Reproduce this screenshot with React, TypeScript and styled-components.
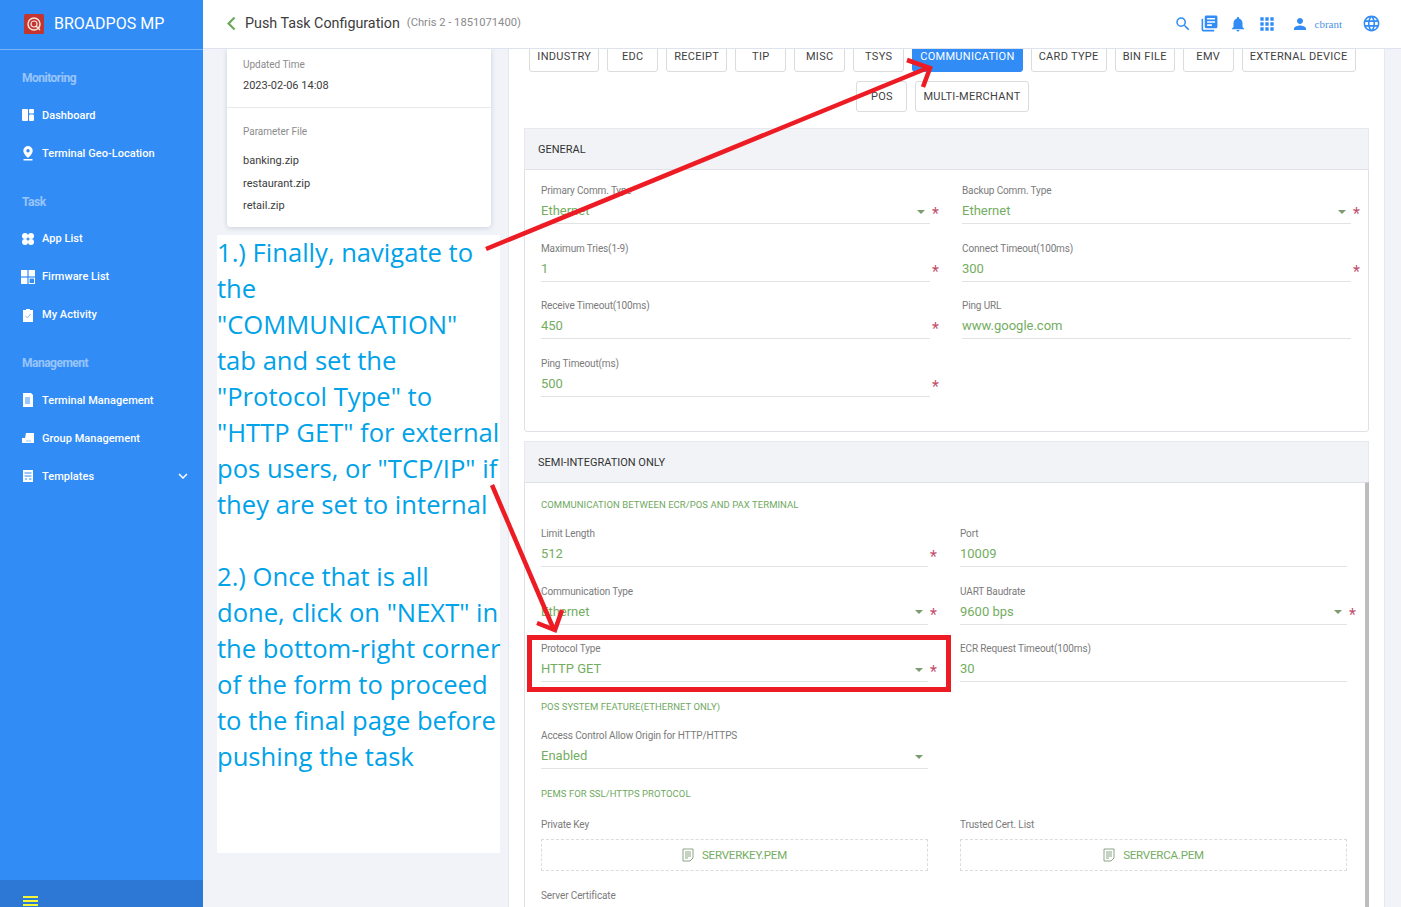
import React from "react";
import styled, { createGlobalStyle } from "styled-components";
import {
  MdApps,
  MdChevronLeft,
  MdExpandMore,
  MdLanguage,
  MdLibraryBooks,
  MdNotifications,
  MdPerson,
  MdSearch,
} from "react-icons/md";

const GlobalStyle = createGlobalStyle`
  html, body {
    margin: 0;
    padding: 0;
    background: #f1f3f8;
    font-family: Roboto, "Liberation Sans", sans-serif;
  }
  * {
    box-sizing: border-box;
  }
`;

const Page = styled.div`
  position: relative;
  display: flex;
  width: 1401px;
  height: 907px;
  overflow: hidden;
`;

/* ---------- sidebar ---------- */

const Sidebar = styled.aside`
  display: flex;
  flex-direction: column;
  width: 203px;
  height: 907px;
  background: #318cf6;
  color: #fff;
`;

const Brand = styled.div`
  display: flex;
  align-items: center;
  gap: 10px;
  height: 50px;
  padding: 0 0 2px 24px;
  border-bottom: 1px solid rgba(255, 255, 255, 0.35);
  font-size: 16px;
`;

const Nav = styled.nav`
  flex: 1;
  display: flex;
  flex-direction: column;
  gap: 11.5px;
  padding-top: 10px;
`;

const NavGroup = styled.div`
  display: flex;
  flex-direction: column;
`;

const NavTitle = styled.div`
  display: flex;
  align-items: center;
  height: 36px;
  padding-left: 22px;
  font-size: 12px;
  font-weight: 700;
  letter-spacing: -0.5px;
  color: rgba(255, 255, 255, 0.5);
`;

const NavItem = styled.div`
  display: flex;
  align-items: center;
  gap: 7px;
  height: 38px;
  padding: 0 11px 0 21px;
  font-size: 11px;
  letter-spacing: 0.03px;
  font-weight: 500;
  svg {
    flex: none;
  }
  span {
    flex: 1;
  }
`;

const CollapseBar = styled.div`
  height: 27px;
  padding: 16px 0 0 23px;
  background: #2c78d4;
`;

const CollapseLine = styled.div`
  width: 15px;
  height: 2px;
  margin-bottom: 2px;
  background: #f4f536;
`;

/* ---------- header ---------- */

const Main = styled.div`
  flex: 1;
  display: flex;
  flex-direction: column;
  min-width: 0;
`;

const Header = styled.header`
  position: relative;
  z-index: 2;
  display: flex;
  align-items: center;
  flex: none;
  height: 49px;
  padding: 0 20px 1px 15px;
  background: #fff;
  border-bottom: 1px solid #dfe3ee;
`;

const PageTitle = styled.h1`
  margin: 0 0 2px;
  font-size: 14.3px;
  font-weight: 400;
  color: #3c3c3c;
`;

const PageSub = styled.span`
  margin: 0 0 2px 7px;
  font-size: 11.2px;
  color: #8a8a8a;
`;

const HeaderIcons = styled.div`
  display: flex;
  align-items: center;
  margin-left: auto;
  color: #318cf6;
`;

const HeaderIcon = styled.span<{ $gap: number }>`
  display: flex;
  margin-right: ${(p) => p.$gap}px;
`;

const UserName = styled.span`
  margin: 0 20px 0 6px;
  font-family: "Liberation Serif", serif;
  font-size: 11px;
  color: #4c93e6;
`;

/* ---------- content ---------- */

const Content = styled.div`
  flex: 1;
  display: flex;
  min-height: 0;
  overflow: hidden;
`;

const LeftColumn = styled.div`
  flex: none;
  width: 305px;
  padding-left: 24px;
`;

const InfoCard = styled.div`
  width: 264px;
  background: #fff;
  border-radius: 0 0 4px 4px;
  box-shadow: 0 1px 5px rgba(60, 70, 100, 0.2);
`;

const InfoBlock = styled.div<{ $divided?: boolean }>`
  padding: ${(p) => (p.$divided ? "17px 16px 14px" : "9px 16px 14px")};
  border-top: ${(p) => (p.$divided ? "1px solid #e8e8e8" : "none")};
`;

const InfoLabel = styled.div<{ $gap: number }>`
  margin-bottom: ${(p) => p.$gap}px;
  font-size: 10px;
  line-height: 13px;
  letter-spacing: -0.03px;
  color: #8c8c8c;
`;

const InfoValue = styled.div<{ $height: number }>`
  height: ${(p) => p.$height}px;
  font-size: 11px;
  line-height: 14px;
  color: #3c3c3c;
`;

const Panel = styled.main`
  flex: none;
  width: 877px;
  padding: 0 15px;
  background: #fff;
  border-left: 1px solid #e6e8ef;
  border-right: 1px solid #e6e8ef;
`;

const Tabs = styled.div`
  display: flex;
  flex-wrap: wrap;
  justify-content: center;
  gap: 9px 8px;
  margin: -8px 8px 16px 0;
`;

const Tab = styled.div<{ $active?: boolean }>`
  display: flex;
  align-items: center;
  justify-content: center;
  min-width: 51px;
  height: 31px;
  padding: 0 7px;
  border: 1px solid ${(p) => (p.$active ? "#318cf6" : "#dcdcdc")};
  border-radius: 3px;
  background: ${(p) => (p.$active ? "#318cf6" : "#fff")};
  color: ${(p) => (p.$active ? "#fff" : "#3f3f3f")};
  font-size: 11px;
  letter-spacing: 0.3px;
`;

const SectionHead = styled.div`
  display: flex;
  align-items: center;
  height: 41px;
  padding-left: 13px;
  background: #f2f3f7;
  border: 1px solid #e8e9ee;
  border-bottom: none;
  font-size: 11px;
  color: #333;
`;

const SectionBody = styled.div<{ $scroll?: boolean }>`
  height: ${(p) => (p.$scroll ? "430px" : "263px")};
  margin-bottom: 9px;
  padding: ${(p) => (p.$scroll ? "15px 0 0 16px" : "14px 0 0 16px")};
  border: 1px solid #dfe1e6;
  border-right: ${(p) => (p.$scroll ? "4px solid #bdbdbd" : "1px solid #dfe1e6")};
  border-radius: 0 0 3px 3px;
  overflow: hidden;
`;

const FieldGrid = styled.div<{ $col: number }>`
  display: grid;
  grid-template-columns: ${(p) => p.$col}px ${(p) => p.$col}px;
  column-gap: 32px;
  row-gap: 17.5px;
`;

const Field = styled.div`
  position: relative;
`;

const FieldLabel = styled.div`
  height: 14px;
  font-size: 10px;
  line-height: 14px;
  letter-spacing: -0.13px;
  color: #7b7b7b;
`;

const FieldValue = styled.div`
  display: flex;
  align-items: center;
  justify-content: space-between;
  height: 26px;
  padding: 1px 5px 1px 0;
  border-bottom: 1px solid #e3e3e3;
  font-size: 13px;
  color: #74ad62;
`;

const Caret = styled.i`
  width: 0;
  height: 0;
  margin-top: 2px;
  border-left: 4px solid transparent;
  border-right: 4px solid transparent;
  border-top: 4px solid #7c9c70;
`;

const Star = styled.span`
  position: absolute;
  right: -9px;
  top: 21px;
  font-size: 16px;
  line-height: 18px;
  color: #c2506b;
`;

const SubHeading = styled.div<{ $top: number; $bottom: number }>`
  margin: ${(p) => p.$top}px 0 ${(p) => p.$bottom}px;
  font-size: 9.5px;
  line-height: 14px;
  letter-spacing: 0.05px;
  color: #6fa961;
`;

const UploadBox = styled.div`
  display: flex;
  align-items: center;
  justify-content: center;
  gap: 8px;
  height: 32px;
  margin-top: 7px;
  border: 1px dashed #dcdcdc;
  font-size: 11.5px;
  letter-spacing: -0.2px;
  color: #74ad62;
`;

/* ---------- things drawn over the page ---------- */

const Note = styled.div`
  position: absolute;
  left: 217px;
  top: 235px;
  z-index: 3;
  width: 283px;
  height: 618px;
  background: #fff;
  color: #00a2e8;
  font-family: "Open Sans", sans-serif;
  font-size: 25.6px;
  line-height: 36px;
  white-space: pre;
`;

const RedBox = styled.div`
  position: absolute;
  left: 527px;
  top: 635px;
  z-index: 3;
  width: 424px;
  height: 57px;
  border: 5px solid #ed1c24;
`;

const Arrows = styled.svg`
  position: absolute;
  left: 0;
  top: 0;
  z-index: 4;
  pointer-events: none;
`;

/* ---------- drawn icons ---------- */

const LogoIcon = () => (
  <svg width="20" height="20" viewBox="0 0 20 20">
    <rect width="20" height="20" rx="1.5" fill="#c4352f" />
    <circle cx="10" cy="10" r="6" fill="none" stroke="#f8e6e0" strokeWidth="1.5" />
    <circle cx="10" cy="10" r="3" fill="none" stroke="#f8e6e0" strokeWidth="1.2" />
    <path d="M12 12l4 4" stroke="#f8e6e0" strokeWidth="1.5" />
  </svg>
);

const DashboardIcon = () => (
  <svg width="14" height="14" viewBox="0 0 14 14" fill="#fff">
    <rect x="1" y="1" width="6" height="12" rx="1" />
    <rect x="8" y="1" width="5" height="4.5" rx="1" />
    <rect x="8" y="6.5" width="5" height="6.5" rx="1" />
  </svg>
);

const PinIcon = () => (
  <svg width="14" height="15" viewBox="0 0 14 15" fill="#fff">
    <path
      fillRule="evenodd"
      d="M7 0a4.7 4.7 0 0 1 4.7 4.7C11.700 8 7 12 7 12S2.300 8 2.300 4.700A4.700 4.700 0 0 1 7 0zm0 3a1.700 1.700 0 1 0 0 3.400A1.700 1.700 0 0 0 7 3z"
    />
    <rect x="2.500" y="13" width="9" height="1.500" />
  </svg>
);

const AppsIcon = () => (
  <svg width="14" height="14" viewBox="0 0 14 14" fill="#fff">
    <circle cx="4" cy="4" r="3" />
    <circle cx="10" cy="4" r="3" />
    <circle cx="4" cy="10" r="3" />
    <circle cx="10" cy="10" r="3" />
  </svg>
);

const FirmwareIcon = () => (
  <svg width="14" height="14" viewBox="0 0 14 14" fill="#fff">
    <rect width="6.4" height="6.4" />
    <rect x="7.6" width="6.4" height="6.4" />
    <rect y="7.6" width="6.4" height="6.4" />
    <rect x="8.1" y="8.1" width="5.4" height="5.4" fill="none" stroke="#fff" />
  </svg>
);

const ActivityIcon = () => (
  <svg width="14" height="14" viewBox="0 0 14 14" fill="#fff">
    <path d="M2 2h3V1h4v1h3v12H2z" />
    <path d="M4.5 8l2 2 3-4" fill="none" stroke="#8db9f0" />
  </svg>
);

const TerminalIcon = () => (
  <svg width="14" height="14" viewBox="0 0 14 14" fill="#fff">
    <path d="M2 0h8l2 2v12H2z" />
    <rect x="4" y="4" width="5" height="7" fill="#9cc6fa" />
  </svg>
);

const GroupIcon = () => (
  <svg width="14" height="14" viewBox="0 0 14 14" fill="#fff">
    <path d="M5 2h8v10H1V7h3z" />
    <path d="M5 10h5" stroke="#9cc6fa" />
  </svg>
);

const TemplateIcon = () => (
  <svg width="14" height="14" viewBox="0 0 14 14" fill="#fff">
    <path d="M2 1h10v12H2z" />
    <path d="M3.5 4h7M3.5 7h7M4 10h2M8 10h2.5" stroke="#318cf6" strokeWidth="1.1" />
  </svg>
);

const FileIcon = () => (
  <svg width="12" height="14" viewBox="0 0 12 14" fill="none" stroke="#7f9c78" strokeWidth="0.9">
    <path d="M1 1h10v9l-3 3H1z" />
    <path d="M3 4h6M3 6h6M3 8h6M3 10h3" />
  </svg>
);

/* ---------- data ---------- */

const navGroups = [
  {
    title: "Monitoring",
    items: [
      { label: "Dashboard", icon: <DashboardIcon /> },
      { label: "Terminal Geo-Location", icon: <PinIcon /> },
    ],
  },
  {
    title: "Task",
    items: [
      { label: "App List", icon: <AppsIcon /> },
      { label: "Firmware List", icon: <FirmwareIcon /> },
      { label: "My Activity", icon: <ActivityIcon /> },
    ],
  },
  {
    title: "Management",
    items: [
      { label: "Terminal Management", icon: <TerminalIcon /> },
      { label: "Group Management", icon: <GroupIcon /> },
      { label: "Templates", icon: <TemplateIcon />, more: true },
    ],
  },
];

const tabs = [
  "INDUSTRY",
  "EDC",
  "RECEIPT",
  "TIP",
  "MISC",
  "TSYS",
  "COMMUNICATION",
  "CARD TYPE",
  "BIN FILE",
  "EMV",
  "EXTERNAL DEVICE",
  "POS",
  "MULTI-MERCHANT",
];

interface FieldData {
  label: string;
  value: string;
  select?: boolean;
  required?: boolean;
}

const generalFields: FieldData[] = [
  { label: "Primary Comm. Type", value: "Ethernet", select: true, required: true },
  { label: "Backup Comm. Type", value: "Ethernet", select: true, required: true },
  { label: "Maximum Tries(1-9)", value: "1", required: true },
  { label: "Connect Timeout(100ms)", value: "300", required: true },
  { label: "Receive Timeout(100ms)", value: "450", required: true },
  { label: "Ping URL", value: "www.google.com" },
  { label: "Ping Timeout(ms)", value: "500", required: true },
];

const ecrFields: FieldData[] = [
  { label: "Limit Length", value: "512", required: true },
  { label: "Port", value: "10009" },
  { label: "Communication Type", value: "Ethernet", select: true, required: true },
  { label: "UART Baudrate", value: "9600 bps", select: true, required: true },
  { label: "Protocol Type", value: "HTTP GET", select: true, required: true },
  { label: "ECR Request Timeout(100ms)", value: "30" },
];

const noteText = `1.) Finally, navigate to
the
"COMMUNICATION"
tab and set the
"Protocol Type" to
"HTTP GET" for external
pos users, or "TCP/IP" if
they are set to internal

2.) Once that is all
done, click on "NEXT" in
the bottom-right corner
of the form to proceed
to the final page before
pushing the task`;

const FormField: React.FC<{ field: FieldData }> = ({ field }) => (
  <Field>
    <FieldLabel>{field.label}</FieldLabel>
    <FieldValue>
      {field.value}
      {field.select && <Caret />}
    </FieldValue>
    {field.required && <Star>*</Star>}
  </Field>
);

export default function App() {
  return (
    <Page>
      <GlobalStyle />
      <Sidebar>
        <Brand>
          <LogoIcon />
          BROADPOS MP
        </Brand>
        <Nav>
          {navGroups.map((group) => (
            <NavGroup key={group.title}>
              <NavTitle>{group.title}</NavTitle>
              {group.items.map((item) => (
                <NavItem key={item.label}>
                  {item.icon}
                  <span>{item.label}</span>
                  {"more" in item && <MdExpandMore size={18} />}
                </NavItem>
              ))}
            </NavGroup>
          ))}
        </Nav>
        <CollapseBar>
          <CollapseLine />
          <CollapseLine />
          <CollapseLine />
        </CollapseBar>
      </Sidebar>

      <Main>
        <Header>
          <MdChevronLeft size={27} color="#6fa961" />
          <PageTitle>Push Task Configuration</PageTitle>
          <PageSub>(Chris 2 - 1851071400)</PageSub>
          <HeaderIcons>
            <HeaderIcon $gap={8}>
              <MdSearch size={18} />
            </HeaderIcon>
            <HeaderIcon $gap={10}>
              <MdLibraryBooks size={19} />
            </HeaderIcon>
            <HeaderIcon $gap={10}>
              <MdNotifications size={18} />
            </HeaderIcon>
            <HeaderIcon $gap={14}>
              <MdApps size={20} />
            </HeaderIcon>
            <HeaderIcon $gap={0}>
              <MdPerson size={18} />
            </HeaderIcon>
            <UserName>cbrant</UserName>
            <HeaderIcon $gap={0}>
              <MdLanguage size={19} />
            </HeaderIcon>
          </HeaderIcons>
        </Header>

        <Content>
          <LeftColumn>
            <InfoCard>
              <InfoBlock>
                <InfoLabel $gap={8}>Updated Time</InfoLabel>
                <InfoValue $height={14}>2023-02-06 14:08</InfoValue>
              </InfoBlock>
              <InfoBlock $divided>
                <InfoLabel $gap={16}>Parameter File</InfoLabel>
                <InfoValue $height={23}>banking.zip</InfoValue>
                <InfoValue $height={22}>restaurant.zip</InfoValue>
                <InfoValue $height={14}>retail.zip</InfoValue>
              </InfoBlock>
            </InfoCard>
          </LeftColumn>

          <Panel>
            <Tabs>
              {tabs.map((tab) => (
                <Tab key={tab} $active={tab === "COMMUNICATION"}>
                  {tab}
                </Tab>
              ))}
            </Tabs>

            <SectionHead>GENERAL</SectionHead>
            <SectionBody>
              <FieldGrid $col={389}>
                {generalFields.map((field) => (
                  <FormField key={field.label} field={field} />
                ))}
              </FieldGrid>
            </SectionBody>

            <SectionHead>SEMI-INTEGRATION ONLY</SectionHead>
            <SectionBody $scroll>
              <SubHeading $top={0} $bottom={15}>
                COMMUNICATION BETWEEN ECR/POS AND PAX TERMINAL
              </SubHeading>
              <FieldGrid $col={387}>
                {ecrFields.map((field) => (
                  <FormField key={field.label} field={field} />
                ))}
              </FieldGrid>
              <SubHeading $top={18} $bottom={15}>
                POS SYSTEM FEATURE(ETHERNET ONLY)
              </SubHeading>
              <FieldGrid $col={387}>
                <FormField
                  field={{
                    label: "Access Control Allow Origin for HTTP/HTTPS",
                    value: "Enabled",
                    select: true,
                  }}
                />
              </FieldGrid>
              <SubHeading $top={18} $bottom={17}>
                PEMS FOR SSL/HTTPS PROTOCOL
              </SubHeading>
              <FieldGrid $col={387}>
                <div>
                  <FieldLabel>Private Key</FieldLabel>
                  <UploadBox>
                    <FileIcon />
                    SERVERKEY.PEM
                  </UploadBox>
                </div>
                <div>
                  <FieldLabel>Trusted Cert. List</FieldLabel>
                  <UploadBox>
                    <FileIcon />
                    SERVERCA.PEM
                  </UploadBox>
                </div>
                <FieldLabel>Server Certificate</FieldLabel>
              </FieldGrid>
            </SectionBody>
          </Panel>
        </Content>
      </Main>

      <Note>{noteText}</Note>
      <RedBox />
      <Arrows width="1401" height="907" fill="none" stroke="#ed1c24" strokeWidth="4.5">
        <path d="M486 249L930 67" />
        <path d="M907 60L930 68L923 87" />
        <path d="M492 485L554 630" />
        <path d="M537 623L555 630L562 610" />
      </Arrows>
    </Page>
  );
}
